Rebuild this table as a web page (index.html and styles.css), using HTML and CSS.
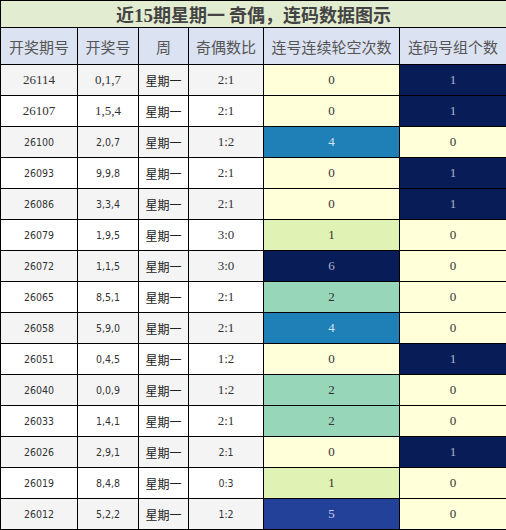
FILE: index.html
```html
<!DOCTYPE html>
<html lang="zh-CN">
<head>
  <meta charset="UTF-8">
  <title>近15期星期一 奇偶，连码数据图示</title>
  <link rel="stylesheet" href="styles.css">
</head>
<body>
<table class="chart">
  <colgroup>
    <col class="c1"><col class="c2"><col class="c3"><col class="c4"><col class="c5"><col class="c6">
  </colgroup>
  <tr class="title-row"><td colspan="6">近<span class="num">15</span>期星期一 奇偶，连码数据图示</td></tr>
  <tr class="head-row">
    <th>开奖期号</th><th>开奖号</th><th>周</th><th>奇偶数比</th><th>连号连续轮空次数</th><th>连码号组个数</th>
  </tr>
  <tr class="odd"><td class="serif">26114</td><td class="serif">0,1,7</td><td class="wk">星期一</td><td class="serif">2:1</td><td class="v0">0</td><td class="g1">1</td></tr>
  <tr><td class="serif">26107</td><td class="serif">1,5,4</td><td class="wk">星期一</td><td class="serif">2:1</td><td class="v0">0</td><td class="g1">1</td></tr>
  <tr class="odd"><td>26100</td><td>2,0,7</td><td class="wk">星期一</td><td class="serif">1:2</td><td class="v4">4</td><td class="g0">0</td></tr>
  <tr><td>26093</td><td>9,9,8</td><td class="wk">星期一</td><td class="serif">2:1</td><td class="v0">0</td><td class="g1">1</td></tr>
  <tr class="odd"><td>26086</td><td>3,3,4</td><td class="wk">星期一</td><td class="serif">2:1</td><td class="v0">0</td><td class="g1">1</td></tr>
  <tr><td>26079</td><td>1,9,5</td><td class="wk">星期一</td><td class="serif">3:0</td><td class="v1">1</td><td class="g0">0</td></tr>
  <tr class="odd"><td>26072</td><td>1,1,5</td><td class="wk">星期一</td><td class="serif">3:0</td><td class="v6">6</td><td class="g0">0</td></tr>
  <tr><td>26065</td><td>8,5,1</td><td class="wk">星期一</td><td class="serif">2:1</td><td class="v2">2</td><td class="g0">0</td></tr>
  <tr class="odd"><td>26058</td><td>5,9,0</td><td class="wk">星期一</td><td class="serif">2:1</td><td class="v4">4</td><td class="g0">0</td></tr>
  <tr><td>26051</td><td>0,4,5</td><td class="wk">星期一</td><td class="serif">1:2</td><td class="v0">0</td><td class="g1">1</td></tr>
  <tr class="odd"><td>26040</td><td>0,0,9</td><td class="wk">星期一</td><td class="serif">1:2</td><td class="v2">2</td><td class="g0">0</td></tr>
  <tr><td>26033</td><td>1,4,1</td><td class="wk">星期一</td><td class="serif">2:1</td><td class="v2">2</td><td class="g0">0</td></tr>
  <tr class="odd"><td>26026</td><td>2,9,1</td><td class="wk">星期一</td><td>2:1</td><td class="v0">0</td><td class="g1">1</td></tr>
  <tr><td>26019</td><td>8,4,8</td><td class="wk">星期一</td><td>0:3</td><td class="v1">1</td><td class="g0">0</td></tr>
  <tr class="odd"><td>26012</td><td>5,2,2</td><td class="wk">星期一</td><td>1:2</td><td class="v5">5</td><td class="g0">0</td></tr>
</table>
</body>
</html>
```

FILE: styles.css
```css
body { margin: 0; background: #fff; font-family: "DejaVu Sans Condensed", "DejaVu Sans", sans-serif; }

.chart { border-collapse: collapse; width: 506px; table-layout: fixed; }
.chart td, .chart th {
  border: 1px solid #000; padding: 0; text-align: center;
  font-size: 10.5px; color: #333; height: 30px; background: #fff;
}
.c1 { width: 77px; } .c2 { width: 61px; } .c3 { width: 50px; }
.c4 { width: 75px; } .c5 { width: 136px; } .c6 { width: 107px; }

.title-row td {
  height: 26px; background: #e2ecd0; color: #444;
  font-family: "Noto Sans CJK SC", sans-serif; font-size: 18px; font-weight: bold;
}
.title-row .num { font-family: "Liberation Serif", serif; font-size: 19px; }

.head-row th {
  height: 36px; background: #dbe2f1; color: #555; font-weight: normal;
  font-family: "Noto Sans CJK SC", sans-serif; font-size: 15px;
}

.odd td { background: #f4f4f4; }
.chart td.wk { font-family: "Noto Sans CJK SC", sans-serif; font-size: 12px; color: #222; }
.chart td.serif, .chart td.v0, .chart td.v1, .chart td.v2, .chart td.v4,
.chart td.v5, .chart td.v6, .chart td.g0, .chart td.g1 {
  font-family: "Liberation Serif", serif; font-size: 13px;
}

/* 轮空次数色阶 */
.chart td.v0 { background: #ffffd9; }
.chart td.v1 { background: #e0f3b4; }
.chart td.v2 { background: #98d6b9; }
.chart td.v4 { background: #1f80b8; color: #d6e6f2; }
.chart td.v5 { background: #24419a; color: #c8cfe6; }
.chart td.v6 { background: #081d58; color: #aab3cc; }

/* 连码组个数 */
.chart td.g0 { background: #ffffd9; }
.chart td.g1 { background: #081d58; color: #aab3cc; }
```
